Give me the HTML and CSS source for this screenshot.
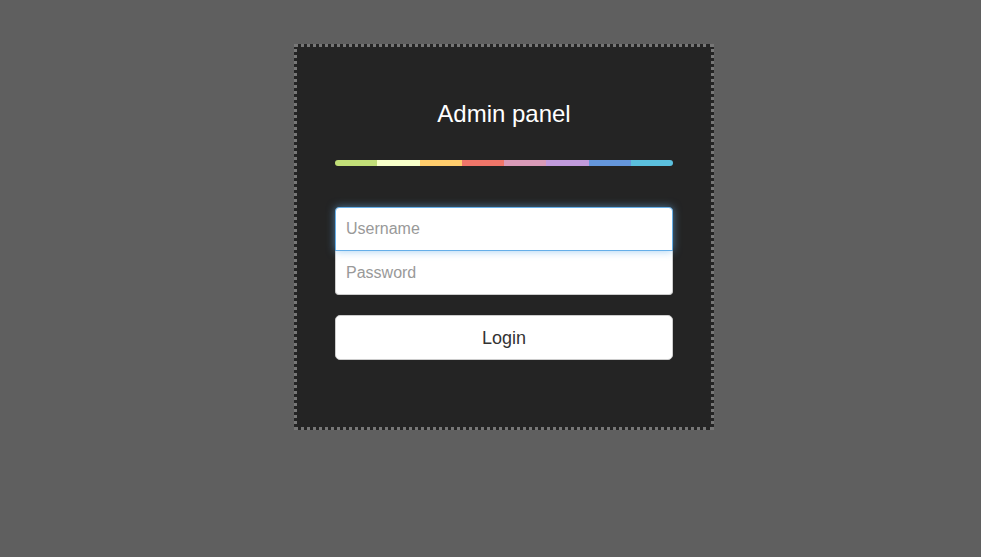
FILE: index.html
```html
<!DOCTYPE html>
<html lang="en">
<head>
<meta charset="utf-8">
<title>Admin panel</title>
<link rel="stylesheet" href="styles.css">
</head>
<body>
<div class="page">
  <form class="panel">
    <h1 class="title">Admin panel</h1>
    <div class="rainbow">
      <span class="seg c1"></span><span class="seg c2"></span><span class="seg c3"></span><span class="seg c4"></span><span class="seg c5"></span><span class="seg c6"></span><span class="seg c7"></span><span class="seg c8"></span>
    </div>
    <div class="fields">
      <input class="field field-top is-focus" type="text" placeholder="Username" autofocus>
      <input class="field field-bottom" type="password" placeholder="Password">
    </div>
    <button class="btn" type="button">Login</button>
  </form>
</div>
</body>
</html>
```
FILE: styles.css
```css
html, body {
  margin: 0;
  padding: 0;
  background: #5f5f5f;
  font-family: "Liberation Sans", Arial, sans-serif;
}
.page {
  padding: 44px 0 0 294px;
}
.panel {
  box-sizing: border-box;
  width: 420px;
  height: 386px;
  background: #242424;
  border: 3px dotted #777;
  padding: 53px 38px 0 38px;
  display: flex;
  flex-direction: column;
}
.title {
  margin: 0;
  font-weight: normal;
  font-size: 24px;
  line-height: 27px;
  color: #fff;
  text-align: center;
}
.rainbow {
  margin-top: 33px;
  height: 6px;
  display: flex;
  border-radius: 3px;
  overflow: hidden;
}
.seg { flex: 1; }
.c1 { background: #c2df78; }
.c2 { background: #f8ffc9; }
.c3 { background: #ffcd6c; }
.c4 { background: #f0766a; }
.c5 { background: #d99bb8; }
.c6 { background: #c19bdc; }
.c7 { background: #6597dc; }
.c8 { background: #5bc0de; }
.fields {
  margin-top: 41px;
  display: flex;
  flex-direction: column;
}
.field {
  box-sizing: border-box;
  width: 100%;
  height: 44px;
  margin: 0;
  padding: 0 10px;
  font-family: "Liberation Sans", Arial, sans-serif;
  font-size: 16px;
  color: #333;
  background: #fff;
  border: 1px solid #ccc;
  outline: none;
}
.field::placeholder { color: #999; }
.field-top {
  border-radius: 4px 4px 0 0;
  position: relative;
  z-index: 1;
}
.field-bottom {
  border-radius: 0 0 4px 4px;
  border-top: 0;
}
.is-focus, .field:focus {
  border-color: #66afe9;
  box-shadow: 0 0 8px rgba(102, 175, 233, 0.6);
}
.btn {
  box-sizing: border-box;
  margin-top: 20px;
  width: 100%;
  height: 45px;
  padding: 1px 0 0;
  background: #fff;
  border: 1px solid #ccc;
  border-radius: 5px;
  font-family: "Liberation Sans", Arial, sans-serif;
  font-size: 18px;
  color: #333;
  cursor: pointer;
}
```
